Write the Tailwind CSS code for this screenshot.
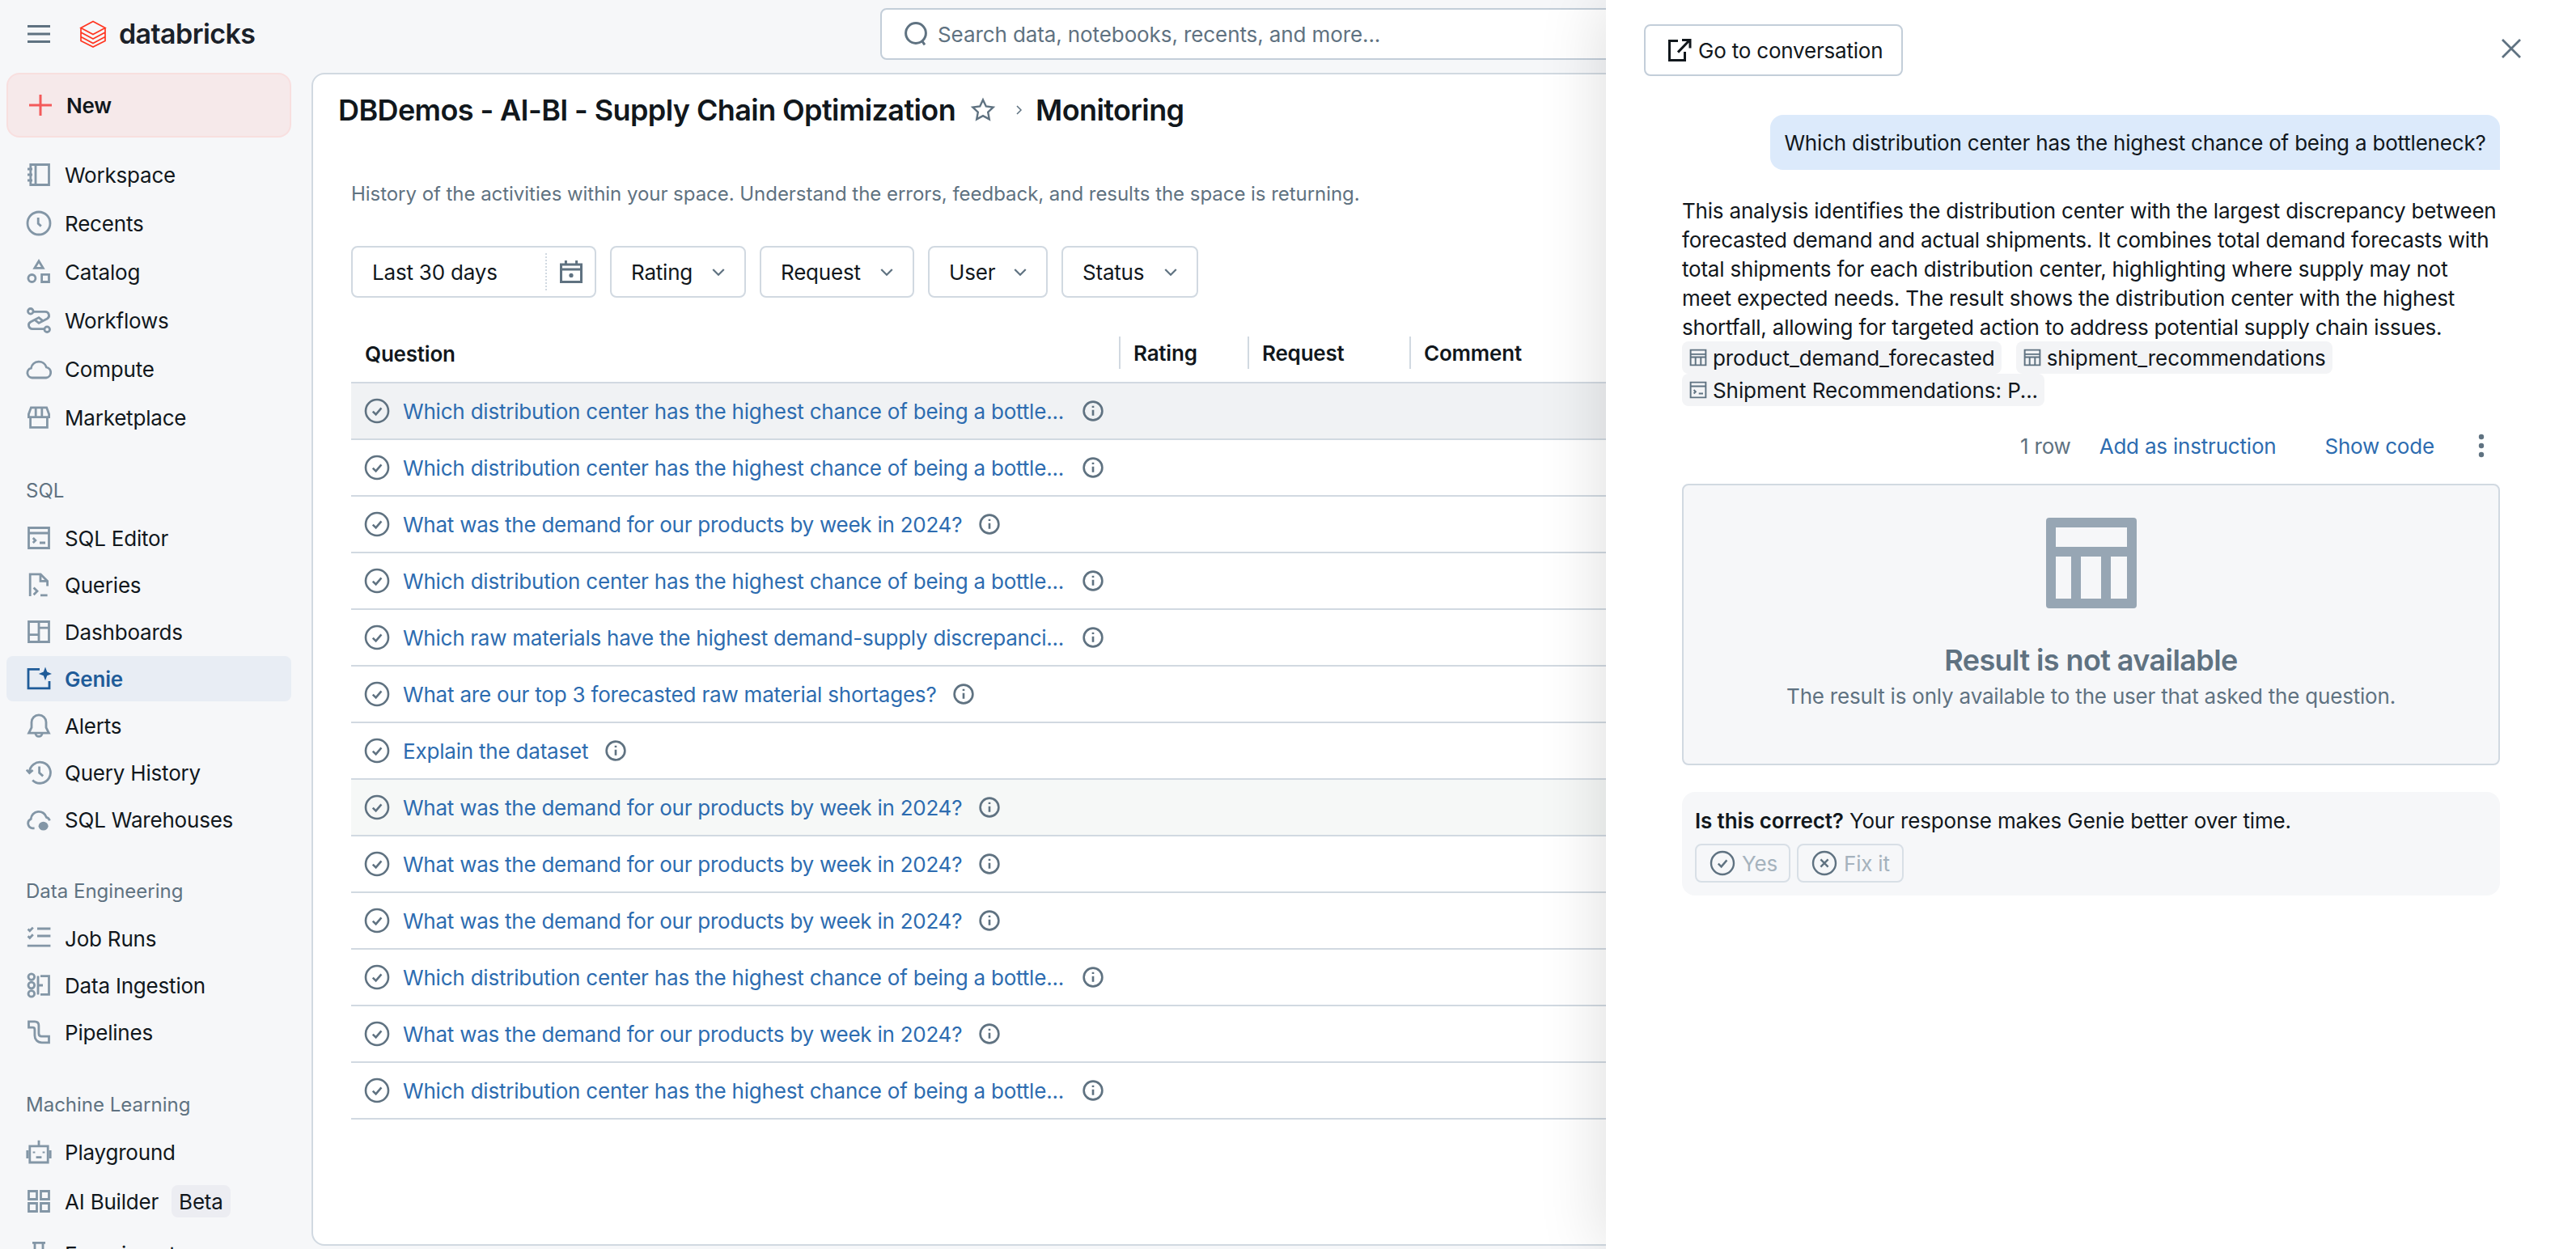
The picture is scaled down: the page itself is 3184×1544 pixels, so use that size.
<!DOCTYPE html>
<html lang="en">
<head>
  <meta charset="UTF-8">
  <title>Genie Monitoring - Databricks</title>
  <script src="https://cdn.jsdelivr.net/npm/@tailwindcss/browser@4"></script>
</head>
<body class="relative w-[3184px] h-[1544px] overflow-hidden bg-[#f6f7f9] font-[Inter,sans-serif] text-[26px] tracking-[-0.2px] text-[#11171c]">
  <svg class="hidden">
    <defs>
      <symbol id="i-workspace" viewBox="0 0 16 16"><path d="M2.900 1.750h11.350v12.500H2.900zM6 1.750v12.500M1 4.500h3M1 8h3M1 11.500h3"/></symbol>
      <symbol id="i-clock" viewBox="0 0 16 16"><circle cx="8" cy="8" r="7"/><path d="M7.600 4.500v3.700l1.800 1.600"/></symbol>
      <symbol id="i-catalog" viewBox="0 0 16 16"><path d="M8 1.400l2.600 4.300H5.400zM9.800 9.700h4.450v4.550H9.800z"/><circle cx="3.700" cy="12" r="2.250"/></symbol>
      <symbol id="i-workflows" viewBox="0 0 16 16"><circle cx="2.900" cy="2.400" r="1.650"/><circle cx="13.100" cy="13.600" r="1.650"/><path d="M4.600 2.700H12a2.300 2.300 0 0 1 1.100 4.300L8 9.700 5.300 7.600M11.400 13.300H4a2.300 2.300 0 0 1-1.100-4.300L8 6.300l2.700 2.100"/></symbol>
      <symbol id="i-cloud" viewBox="0 0 16 16"><path d="M3.800 13.500a3 3 0 0 1-.6-5.900 4.900 4.900 0 0 1 9.500-.6 3.300 3.300 0 0 1-.2 6.500z"/></symbol>
      <symbol id="i-market" viewBox="0 0 16 16"><path d="M3.200 1.900h9.600L14.300 6v1.800H1.700V6zM6.100 1.900v5.900M9.900 1.900v5.900M2.800 7.800v6.400h10.400V7.800"/></symbol>
      <symbol id="i-editor" viewBox="0 0 16 16"><path d="M1.750 1.750h12.500v12.500H1.750zM1.750 5h12.500M4.400 8l1.500 1.500-1.500 1.500M8.500 11h3.500"/></symbol>
      <symbol id="i-queries" viewBox="0 0 16 16"><path d="M2.600 15V1.400h6.500l4.200 4.300v3M9 1.400v4.300h4.300M4.800 9.700L7 11.900l-2.200 2.200M9 14.400h4.300"/></symbol>
      <symbol id="i-dash" viewBox="0 0 16 16"><path d="M1.750 1.750h12.500v12.500H1.750zM8 1.750v12.500M1.750 9.800H8M8 5.600h6.250"/></symbol>
      <symbol id="i-genie" viewBox="0 0 16 16"><path d="M8.500 2.200H1.500v11.700h13V9.500"/><path fill="currentColor" stroke="none" d="M12 .8l1.100 3 3 1.200-3 1.100-1.100 3-1.100-3-3-1.100 3-1.200z"/></symbol>
      <symbol id="i-bell" viewBox="0 0 16 16"><path d="M8 1.400a4.500 4.500 0 0 0-4.500 4.500v3.300L1.800 12.600h12.400l-1.700-3.400V5.900A4.500 4.500 0 0 0 8 1.400zM5.900 12.600a2.100 2.100 0 0 0 4.200 0"/></symbol>
      <symbol id="i-history" viewBox="0 0 16 16"><path d="M2.200 8a6.500 6.500 0 1 1 1.900 4.700M.4 6.300l1.800 2 2.100-1.800M8.300 4.300v3.900l2.300 2"/></symbol>
      <symbol id="i-warehouse" viewBox="0 0 16 16"><path d="M5.300 13.400H4a3 3 0 0 1-.9-5.700 4.900 4.900 0 0 1 9.600-1 3 3 0 0 1 2 2"/><ellipse cx="10.800" cy="12.100" rx="3" ry="2.700" fill="currentColor" stroke="none"/></symbol>
      <symbol id="i-jobs" viewBox="0 0 16 16"><path d="M1.300 2.300l1.100 1.100 2-2.100M1.300 6.600l1.100 1.100 2-2.100M7 2h8.200M7 6.500h8.200M.9 12.600h14.300"/></symbol>
      <symbol id="i-ingest" viewBox="0 0 16 16"><circle cx="3.400" cy="2.800" r="1.900"/><circle cx="3.400" cy="8" r="1.900"/><circle cx="3.400" cy="13.200" r="1.900"/><path d="M9 2.300h5.250v11.400H9M7 8h3.500M7.500 2.300v11.400"/></symbol>
      <symbol id="i-pipes" viewBox="0 0 16 16"><path d="M1.750 1.400h3.700c1.600 0 2.500 1 2.500 2.500v4.900c0 1.200.6 1.800 1.700 1.800h4.600v3.800h-4.400c-2.700 0-4.400-1.800-4.400-4.400V6.400c0-1-.4-1.300-1.200-1.300H1.750z"/></symbol>
      <symbol id="i-robot" viewBox="0 0 16 16"><path d="M2.400 4.400h11.200v10.100H2.400zM8 .9v3.500M.9 7v5M15.100 7v5M6.300 11.300h3.400M5 7.800v1M11 7.800v1"/></symbol>
      <symbol id="i-grid" viewBox="0 0 16 16"><path d="M1.750 1.750h5v5h-5zM9.250 1.750h5v5h-5zM1.750 9.250h5v5h-5zM9.250 9.250h5v5h-5z"/></symbol>
      <symbol id="i-flask" viewBox="0 0 16 16"><path d="M5.500 1.200v5.300L2 14.500h12L10.500 6.500V1.200M4 1.200h8"/></symbol>
      <symbol id="i-check" viewBox="0 0 16 16"><circle cx="8" cy="8" r="7"/><path d="M5.400 8.300l1.900 1.900 3.400-4"/></symbol>
      <symbol id="i-x" viewBox="0 0 16 16"><circle cx="8" cy="8" r="7"/><path d="M5.700 5.700l4.600 4.600M10.300 5.700l-4.600 4.600"/></symbol>
      <symbol id="i-info" viewBox="0 0 16 16"><circle cx="8" cy="8" r="6.500"/><path d="M8 7.300v4M8 4.400v1.300"/></symbol>
      <symbol id="i-chev" viewBox="0 0 16 16"><path d="M3.500 6l4.500 4.500L12.500 6"/></symbol>
      <symbol id="i-table" viewBox="0 0 16 16"><path d="M1.750 1.750h12.500v12.500H1.750zM1.750 5.250h12.500M1.750 7.600h12.500M5.800 7.600v6.600M10.200 7.600v6.600"/></symbol>
    </defs>
  </svg>

  <header class="h-[84px] flex items-center">
    <div class="w-[1088px] flex items-center">
      <svg class="ml-[34px] w-[28px] h-[22px] text-[#5f7281] fill-none stroke-current stroke-[3]" viewBox="0 0 28 22"><path d="M0 1.500h28M0 11h28M0 20.500h28"/></svg>
      <svg class="ml-[36px] w-[34px] h-[34px] text-[#ff3621] fill-none stroke-current stroke-[1.700]" viewBox="0 0 34 34"><path d="M2 9.500L17 1.500l15 8-15 8zM2 10v5l15 8 15-8v-5M2 15.500v5l15 8 15-8v-5M2 21v4.500l15 7.500 15-7.500V21"/></svg>
      <span class="ml-[15px] text-[34px] leading-none font-semibold tracking-[-0.6px] text-[#1b2129]">databricks</span>
    </div>
    <div class="w-[1100px] h-[64px] bg-white border-2 border-[#c3ced9] rounded-lg flex items-center pl-[26px] text-[#5f7281] tracking-[-0.1px]">
      <svg class="w-[32px] h-[32px] fill-none stroke-current stroke-[1.500]" viewBox="0 0 16 16"><circle cx="8" cy="7.500" r="6.200"/><path d="M11.800 12.300l1.700 2.400"/></svg>
      <span class="ml-[11px]">Search data, notebooks, recents, and more...</span>
    </div>
  </header>

  <div class="flex h-[1460px]">
    <aside class="w-[385px] shrink-0 pl-2 pr-[25px] pt-[6px] overflow-hidden flex flex-col gap-[2px]">
      <div class="shrink-0 h-[80px] mb-[15px] flex items-center gap-[16px] pl-6 rounded-2xl border-2 border-[#f8dfdf] bg-[#f6e9ea] font-semibold">
        <svg class="w-8 h-8 text-[#f35a5a] fill-none stroke-current stroke-[1.500]" viewBox="0 0 16 16"><path d="M8 1.500v13M1 8h14"/></svg>New
      </div>
      <a class="shrink-0 h-[58px] flex items-center gap-[16px] pl-6"><svg class="w-8 h-8 text-[#8396a6] fill-none stroke-current stroke-[1.400]"><use href="#i-workspace"/></svg>Workspace</a>
      <a class="shrink-0 h-[58px] flex items-center gap-[16px] pl-6"><svg class="w-8 h-8 text-[#8396a6] fill-none stroke-current stroke-[1.400]"><use href="#i-clock"/></svg>Recents</a>
      <a class="shrink-0 h-[58px] flex items-center gap-[16px] pl-6"><svg class="w-8 h-8 text-[#8396a6] fill-none stroke-current stroke-[1.400]"><use href="#i-catalog"/></svg>Catalog</a>
      <a class="shrink-0 h-[58px] flex items-center gap-[16px] pl-6"><svg class="w-8 h-8 text-[#8396a6] fill-none stroke-current stroke-[1.400]"><use href="#i-workflows"/></svg>Workflows</a>
      <a class="shrink-0 h-[58px] flex items-center gap-[16px] pl-6"><svg class="w-8 h-8 text-[#8396a6] fill-none stroke-current stroke-[1.400]"><use href="#i-cloud"/></svg>Compute</a>
      <a class="shrink-0 h-[58px] flex items-center gap-[16px] pl-6"><svg class="w-8 h-8 text-[#8396a6] fill-none stroke-current stroke-[1.400]"><use href="#i-market"/></svg>Marketplace</a>

      <div class="shrink-0 h-[56px] mt-[32px] flex items-center pl-6 text-[24px] tracking-normal text-[#5f7281]">SQL</div>
      <a class="shrink-0 h-[56px] flex items-center gap-[16px] pl-6"><svg class="w-8 h-8 text-[#8396a6] fill-none stroke-current stroke-[1.400]"><use href="#i-editor"/></svg>SQL Editor</a>
      <a class="shrink-0 h-[56px] flex items-center gap-[16px] pl-6"><svg class="w-8 h-8 text-[#8396a6] fill-none stroke-current stroke-[1.400]"><use href="#i-queries"/></svg>Queries</a>
      <a class="shrink-0 h-[56px] flex items-center gap-[16px] pl-6"><svg class="w-8 h-8 text-[#8396a6] fill-none stroke-current stroke-[1.400]"><use href="#i-dash"/></svg>Dashboards</a>
      <a class="shrink-0 h-[56px] flex items-center gap-[16px] pl-6 rounded-lg bg-[#e8edf4] text-[#1f5c99] font-semibold"><svg class="w-8 h-8 fill-none stroke-current stroke-[1.400]"><use href="#i-genie"/></svg>Genie</a>
      <a class="shrink-0 h-[56px] flex items-center gap-[16px] pl-6"><svg class="w-8 h-8 text-[#8396a6] fill-none stroke-current stroke-[1.400]"><use href="#i-bell"/></svg>Alerts</a>
      <a class="shrink-0 h-[56px] flex items-center gap-[16px] pl-6"><svg class="w-8 h-8 text-[#8396a6] fill-none stroke-current stroke-[1.400]"><use href="#i-history"/></svg>Query History</a>
      <a class="shrink-0 h-[56px] flex items-center gap-[16px] pl-6"><svg class="w-8 h-8 text-[#8396a6] fill-none stroke-current stroke-[1.400]"><use href="#i-warehouse"/></svg>SQL Warehouses</a>

      <div class="shrink-0 h-[56px] mt-[31px] flex items-center pl-6 text-[24px] tracking-normal text-[#5f7281]">Data Engineering</div>
      <a class="shrink-0 h-[56px] flex items-center gap-[16px] pl-6"><svg class="w-8 h-8 text-[#8396a6] fill-none stroke-current stroke-[1.400]"><use href="#i-jobs"/></svg>Job Runs</a>
      <a class="shrink-0 h-[56px] flex items-center gap-[16px] pl-6"><svg class="w-8 h-8 text-[#8396a6] fill-none stroke-current stroke-[1.400]"><use href="#i-ingest"/></svg>Data Ingestion</a>
      <a class="shrink-0 h-[56px] flex items-center gap-[16px] pl-6"><svg class="w-8 h-8 text-[#8396a6] fill-none stroke-current stroke-[1.400]"><use href="#i-pipes"/></svg>Pipelines</a>

      <div class="shrink-0 h-[56px] mt-[32px] flex items-center pl-6 text-[24px] tracking-normal text-[#5f7281]">Machine Learning</div>
      <a class="shrink-0 h-[56px] flex items-center gap-[16px] pl-6"><svg class="w-8 h-8 text-[#8396a6] fill-none stroke-current stroke-[1.400]"><use href="#i-robot"/></svg>Playground</a>
      <a class="shrink-0 h-[62px] mb-[4px] flex items-center gap-[16px] pl-6"><svg class="w-8 h-8 text-[#8396a6] fill-none stroke-current stroke-[1.400]"><use href="#i-grid"/></svg>AI Builder<span class="h-10 px-[9px] flex items-center rounded-lg bg-[#ecedf2]">Beta</span></a>
      <a class="shrink-0 h-[56px] flex items-center gap-[16px] pl-6"><svg class="w-8 h-8 text-[#8396a6] fill-none stroke-current stroke-[1.400]"><use href="#i-flask"/></svg>Experiments</a>
    </aside>

    <main class="flex-1 mt-[6px] h-[1450px] bg-white rounded-2xl border-2 border-[#d1d9e1] overflow-hidden">
      <div class="flex items-center h-[88px] pl-[31px] text-[36px] font-semibold tracking-[-0.6px]">
        <h1>DBDemos - AI-BI - Supply Chain Optimization</h1>
        <svg class="ml-[18px] w-[32px] h-[32px] text-[#5f7281] fill-none stroke-current stroke-[1.200]" viewBox="0 0 16 16"><path d="M8 1.700l1.900 4 4.400.6-3.200 3 .8 4.400L8 11.600l-3.900 2.100.8-4.400-3.200-3 4.400-.6z"/></svg>
        <svg class="ml-[20px] w-[16px] h-[16px] text-[#5f7281] fill-none stroke-current stroke-[1.500]" viewBox="0 0 16 16"><path d="M6 3l5 5-5 5"/></svg>
        <span class="ml-[13px]">Monitoring</span>
      </div>

      <p class="mt-[42px] ml-[47px] text-[24px] leading-[36px] tracking-[-0.04px] text-[#5f7281]">History of the activities within your space. Understand the errors, feedback, and results the space is returning.</p>

      <div class="mt-[46px] ml-[47px] flex gap-[17px]">
        <div class="w-[303px] h-[64px] flex items-center border-2 border-[#d1d9e1] rounded-lg">
          <span class="ml-[24px] w-[214px]">Last 30 days</span>
          <span class="h-[46px] border-l-2 border-dotted border-[#d1d9e1]"></span>
          <svg class="ml-[14px] w-[32px] h-[32px] text-[#5f7281] fill-none stroke-current stroke-[1.500]" viewBox="0 0 16 16"><path d="M1.750 3.500h12.500v10.750H1.750zM1.750 6.500h12.500M4.700 1v2.500M11.300 1v2.500"/><circle cx="8" cy="10.200" r="1.300" fill="currentColor" stroke="none"/></svg>
        </div>
        <div class="w-[168px] h-[64px] flex items-center justify-between pl-[24px] pr-[20px] border-2 border-[#d1d9e1] rounded-lg">Rating<svg class="w-[24px] h-[24px] text-[#5f7281] fill-none stroke-current stroke-[1.500]"><use href="#i-chev"/></svg></div>
        <div class="w-[191px] h-[64px] flex items-center justify-between pl-[24px] pr-[20px] border-2 border-[#d1d9e1] rounded-lg">Request<svg class="w-[24px] h-[24px] text-[#5f7281] fill-none stroke-current stroke-[1.500]"><use href="#i-chev"/></svg></div>
        <div class="w-[148px] h-[64px] flex items-center justify-between pl-[24px] pr-[20px] border-2 border-[#d1d9e1] rounded-lg">User<svg class="w-[24px] h-[24px] text-[#5f7281] fill-none stroke-current stroke-[1.500]"><use href="#i-chev"/></svg></div>
        <div class="w-[169px] h-[64px] flex items-center justify-between pl-[24px] pr-[20px] border-2 border-[#d1d9e1] rounded-lg">Status<svg class="w-[24px] h-[24px] text-[#5f7281] fill-none stroke-current stroke-[1.500]"><use href="#i-chev"/></svg></div>
      </div>

      <div class="mt-[33px] ml-[47px]">
        <div class="flex h-[73px] border-b-2 border-[#d1d9e1] font-semibold">
          <div class="w-[949px] pl-[17px] pt-[17px]">Question</div>
          <div class="w-[159px] h-[40px] mt-[15px] pl-[16px] border-l-2 border-[#d1d9e1] flex items-center">Rating</div>
          <div class="w-[200px] h-[40px] mt-[15px] pl-[16px] border-l-2 border-[#d1d9e1] flex items-center">Request</div>
          <div class="w-[300px] h-[40px] mt-[15px] pl-[16px] border-l-2 border-[#d1d9e1] flex items-center">Comment</div>
        </div>
        <ul class="text-[#2d6cb0]">
          <li class="h-[70px] flex items-center pl-[16px] border-b-2 border-[#d1d9e1] bg-[#f0f2f4]"><svg class="shrink-0 w-8 h-8 text-[#5f7281] fill-none stroke-current stroke-[1.300]"><use href="#i-check"/></svg><span class="ml-[16px]">Which distribution center has the highest chance of being a bottle...</span><svg class="shrink-0 ml-[22px] w-[28px] h-[28px] text-[#5f7281] fill-none stroke-current stroke-[1.500]"><use href="#i-info"/></svg></li>
          <li class="h-[70px] flex items-center pl-[16px] border-b-2 border-[#d1d9e1]"><svg class="shrink-0 w-8 h-8 text-[#5f7281] fill-none stroke-current stroke-[1.300]"><use href="#i-check"/></svg><span class="ml-[16px]">Which distribution center has the highest chance of being a bottle...</span><svg class="shrink-0 ml-[22px] w-[28px] h-[28px] text-[#5f7281] fill-none stroke-current stroke-[1.500]"><use href="#i-info"/></svg></li>
          <li class="h-[70px] flex items-center pl-[16px] border-b-2 border-[#d1d9e1]"><svg class="shrink-0 w-8 h-8 text-[#5f7281] fill-none stroke-current stroke-[1.300]"><use href="#i-check"/></svg><span class="ml-[16px] tracking-[-0.25px]">What was the demand for our products by week in 2024?</span><svg class="shrink-0 ml-[20px] w-[28px] h-[28px] text-[#5f7281] fill-none stroke-current stroke-[1.500]"><use href="#i-info"/></svg></li>
          <li class="h-[70px] flex items-center pl-[16px] border-b-2 border-[#d1d9e1]"><svg class="shrink-0 w-8 h-8 text-[#5f7281] fill-none stroke-current stroke-[1.300]"><use href="#i-check"/></svg><span class="ml-[16px]">Which distribution center has the highest chance of being a bottle...</span><svg class="shrink-0 ml-[22px] w-[28px] h-[28px] text-[#5f7281] fill-none stroke-current stroke-[1.500]"><use href="#i-info"/></svg></li>
          <li class="h-[70px] flex items-center pl-[16px] border-b-2 border-[#d1d9e1]"><svg class="shrink-0 w-8 h-8 text-[#5f7281] fill-none stroke-current stroke-[1.300]"><use href="#i-check"/></svg><span class="ml-[16px] tracking-[-0.25px]">Which raw materials have the highest demand-supply discrepanci...</span><svg class="shrink-0 ml-[22px] w-[28px] h-[28px] text-[#5f7281] fill-none stroke-current stroke-[1.500]"><use href="#i-info"/></svg></li>
          <li class="h-[70px] flex items-center pl-[16px] border-b-2 border-[#d1d9e1]"><svg class="shrink-0 w-8 h-8 text-[#5f7281] fill-none stroke-current stroke-[1.300]"><use href="#i-check"/></svg><span class="ml-[16px]">What are our top 3 forecasted raw material shortages?</span><svg class="shrink-0 ml-[20px] w-[28px] h-[28px] text-[#5f7281] fill-none stroke-current stroke-[1.500]"><use href="#i-info"/></svg></li>
          <li class="h-[70px] flex items-center pl-[16px] border-b-2 border-[#d1d9e1]"><svg class="shrink-0 w-8 h-8 text-[#5f7281] fill-none stroke-current stroke-[1.300]"><use href="#i-check"/></svg><span class="ml-[16px]">Explain the dataset</span><svg class="shrink-0 ml-[20px] w-[28px] h-[28px] text-[#5f7281] fill-none stroke-current stroke-[1.500]"><use href="#i-info"/></svg></li>
          <li class="h-[70px] flex items-center pl-[16px] border-b-2 border-[#d1d9e1] bg-[#f6f8f7]"><svg class="shrink-0 w-8 h-8 text-[#5f7281] fill-none stroke-current stroke-[1.300]"><use href="#i-check"/></svg><span class="ml-[16px] tracking-[-0.25px]">What was the demand for our products by week in 2024?</span><svg class="shrink-0 ml-[20px] w-[28px] h-[28px] text-[#5f7281] fill-none stroke-current stroke-[1.500]"><use href="#i-info"/></svg></li>
          <li class="h-[70px] flex items-center pl-[16px] border-b-2 border-[#d1d9e1]"><svg class="shrink-0 w-8 h-8 text-[#5f7281] fill-none stroke-current stroke-[1.300]"><use href="#i-check"/></svg><span class="ml-[16px] tracking-[-0.25px]">What was the demand for our products by week in 2024?</span><svg class="shrink-0 ml-[20px] w-[28px] h-[28px] text-[#5f7281] fill-none stroke-current stroke-[1.500]"><use href="#i-info"/></svg></li>
          <li class="h-[70px] flex items-center pl-[16px] border-b-2 border-[#d1d9e1]"><svg class="shrink-0 w-8 h-8 text-[#5f7281] fill-none stroke-current stroke-[1.300]"><use href="#i-check"/></svg><span class="ml-[16px] tracking-[-0.25px]">What was the demand for our products by week in 2024?</span><svg class="shrink-0 ml-[20px] w-[28px] h-[28px] text-[#5f7281] fill-none stroke-current stroke-[1.500]"><use href="#i-info"/></svg></li>
          <li class="h-[70px] flex items-center pl-[16px] border-b-2 border-[#d1d9e1]"><svg class="shrink-0 w-8 h-8 text-[#5f7281] fill-none stroke-current stroke-[1.300]"><use href="#i-check"/></svg><span class="ml-[16px]">Which distribution center has the highest chance of being a bottle...</span><svg class="shrink-0 ml-[22px] w-[28px] h-[28px] text-[#5f7281] fill-none stroke-current stroke-[1.500]"><use href="#i-info"/></svg></li>
          <li class="h-[70px] flex items-center pl-[16px] border-b-2 border-[#d1d9e1]"><svg class="shrink-0 w-8 h-8 text-[#5f7281] fill-none stroke-current stroke-[1.300]"><use href="#i-check"/></svg><span class="ml-[16px] tracking-[-0.25px]">What was the demand for our products by week in 2024?</span><svg class="shrink-0 ml-[20px] w-[28px] h-[28px] text-[#5f7281] fill-none stroke-current stroke-[1.500]"><use href="#i-info"/></svg></li>
          <li class="h-[70px] flex items-center pl-[16px] border-b-2 border-[#d1d9e1]"><svg class="shrink-0 w-8 h-8 text-[#5f7281] fill-none stroke-current stroke-[1.300]"><use href="#i-check"/></svg><span class="ml-[16px]">Which distribution center has the highest chance of being a bottle...</span><svg class="shrink-0 ml-[22px] w-[28px] h-[28px] text-[#5f7281] fill-none stroke-current stroke-[1.500]"><use href="#i-info"/></svg></li>
        </ul>
      </div>
    </main>
  </div>

  <!-- drawer lies over the page -->
  <section class="absolute right-0 top-0 w-[1199px] h-full bg-white shadow-[0_0_80px_rgba(0,0,0,0.14)] pl-[47px] pt-[30px]">
    <div class="flex items-start justify-between w-[1088px]">
      <button class="w-[320px] h-[64px] flex items-center pl-[26px] border-2 border-[#c3ced9] rounded-lg">
        <svg class="w-[32px] h-[32px] fill-none stroke-current stroke-[1.500]" viewBox="0 0 16 16"><path d="M7 2.300H1.750v12h9.500V9M7 9.300l7-7.300M9.500 1.800h5v5"/></svg>
        <span class="ml-[7px]">Go to conversation</span>
      </button>
      <svg class="mt-[14px] w-[32px] h-[32px] text-[#5f7281] fill-none stroke-current stroke-[1.400]" viewBox="0 0 16 16"><path d="M2.500 2.500l11 11M13.500 2.500l-11 11"/></svg>
    </div>

    <div class="mt-[48px] ml-[156px] w-[902px] h-[68px] flex items-center justify-center bg-[#dceafb] rounded-2xl rounded-br-none">Which distribution center has the highest chance of being a bottleneck?</div>

    <div class="ml-[47px] w-[1011px]">
      <p class="mt-[33px] leading-[36px]">This analysis identifies the distribution center with the largest discrepancy between forecasted demand and actual shipments. It combines total demand forecasts with total shipments for each distribution center, highlighting where supply may not meet expected needs. The result shows the distribution center with the highest shortfall, allowing for targeted action to address potential supply chain issues.</p>
      <div class="-mt-[1px] flex flex-wrap gap-x-[18px] w-[900px] tracking-[-0.08px]">
        <span class="h-10 flex items-center px-[8px] gap-[6px] rounded-lg bg-[#f3f4f6]"><svg class="w-[24px] h-[24px] text-[#5f7281] fill-none stroke-current stroke-[1.300]"><use href="#i-table"/></svg>product_demand_forecasted</span>
        <span class="h-10 flex items-center px-[8px] gap-[6px] rounded-lg bg-[#f3f4f6]"><svg class="w-[24px] h-[24px] text-[#5f7281] fill-none stroke-current stroke-[1.300]"><use href="#i-table"/></svg>shipment_recommendations</span>
        <span class="h-10 flex items-center px-[8px] gap-[6px] rounded-lg bg-[#f3f4f6]"><svg class="w-[24px] h-[24px] text-[#5f7281] fill-none stroke-current stroke-[1.300]"><use href="#i-editor"/></svg>Shipment Recommendations: P...</span>
      </div>
      <div class="mt-[27px] h-[44px] flex items-center">
        <span class="ml-[418px] text-[#5f7281]">1 row</span>
        <span class="ml-[35px] text-[#2d6cb0]">Add as instruction</span>
        <span class="ml-[60px] text-[#2d6cb0]">Show code</span>
        <svg class="ml-[52px] w-[12px] h-[32px] text-[#5f7281] fill-current" viewBox="0 0 12 32"><circle cx="6" cy="5" r="3.200"/><circle cx="6" cy="16" r="3.200"/><circle cx="6" cy="27" r="3.200"/></svg>
      </div>
      <div class="mt-[25px] h-[348px] flex flex-col items-center pt-[40px] bg-[#f6f7f9] border-2 border-[#d1d9e1] rounded-lg">
        <svg class="w-[112px] h-[112px] text-[#97a6b4] fill-current" viewBox="0 0 112 112"><path fill-rule="evenodd" d="M4 0h104a4 4 0 0 1 4 4v104a4 4 0 0 1-4 4H4a4 4 0 0 1-4-4V4a4 4 0 0 1 4-4zM12 12v24h88V12zM12 48v52h19V48zM43 48v52h25V48zM80 48v52h20V48z"/></svg>
        <div class="mt-[42px] text-[36px] leading-[44px] font-semibold tracking-[-0.6px] text-[#5f7281]">Result is not available</div>
        <div class="mt-[5px] leading-[36px] text-[#5f7281]">The result is only available to the user that asked the question.</div>
      </div>
      <div class="mt-[33px] h-[128px] px-4 pt-[18px] bg-[#f6f7f9] rounded-2xl">
        <p class="leading-[36px] tracking-[-0.14px]"><b class="font-semibold">Is this correct?</b> Your response makes Genie better over time.</p>
        <div class="mt-[10px] flex gap-[8px] text-[#a5b2bd]">
          <span class="w-[118px] h-[48px] flex items-center pl-[16px] gap-[8px] border-2 border-[#d8dfe6] rounded-lg"><svg class="w-8 h-8 text-[#5f7281] fill-none stroke-current stroke-[1.200]"><use href="#i-check"/></svg>Yes</span>
          <span class="w-[132px] h-[48px] flex items-center pl-[16px] gap-[8px] border-2 border-[#d8dfe6] rounded-lg"><svg class="w-8 h-8 text-[#5f7281] fill-none stroke-current stroke-[1.200]"><use href="#i-x"/></svg>Fix it</span>
        </div>
      </div>
    </div>
  </section>
</body>
</html>
